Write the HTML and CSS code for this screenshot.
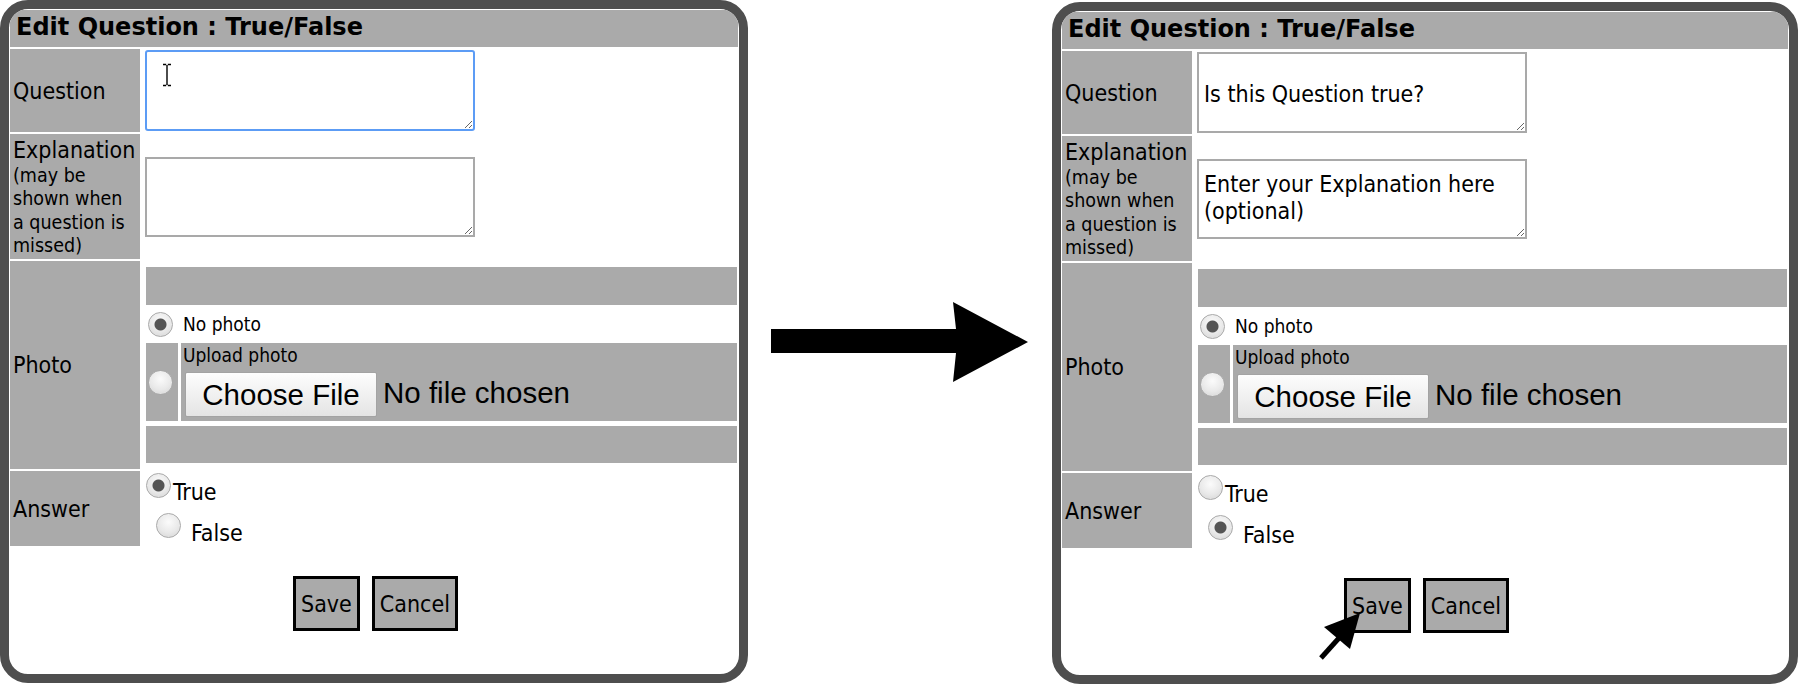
FILE: index.html
```html
<!DOCTYPE html>
<html lang="en">
<head>
<meta charset="utf-8">
<title>Edit Question : True/False</title>
<link rel="stylesheet" href="styles.css">
</head>
<body>
<div class="stage">
  <section class="panel panel-left">
    <div class="title">Edit Question : True/False</div>
    <div class="form">
      <div class="lbl lbl-mid">Question</div>
      <div class="cell cell-q"><textarea class="ta ta-q focus"></textarea></div>
      <div class="lbl lbl-top">Explanation<span class="sub">(may be<br>shown when<br>a question is<br>missed)</span></div>
      <div class="cell cell-e"><textarea class="ta ta-e"></textarea></div>
      <div class="lbl lbl-mid">Photo</div>
      <div class="cell cell-photo">
        <div class="bar"></div>
        <div class="opt"><input type="radio" class="radio" name="p1" checked><span class="small">No photo</span></div>
        <div class="upload">
          <div class="upload-radio"><input type="radio" class="radio" name="p1"></div>
          <div class="upload-main">
            <div class="small upload-label">Upload photo</div>
            <div class="file"><button class="file-btn" type="button">Choose File</button><span class="file-name">No file chosen</span></div>
          </div>
        </div>
        <div class="bar bar-bottom"></div>
      </div>
      <div class="lbl lbl-mid">Answer</div>
      <div class="cell cell-answer">
        <div class="ans ans-true"><input type="radio" class="radio" name="a1" checked><span class="ans-text">True</span></div>
        <div class="ans ans-false"><input type="radio" class="radio" name="a1"><span class="ans-text">False</span></div>
      </div>
    </div>
    <div class="actions"><button class="btn" type="button">Save</button><button class="btn" type="button">Cancel</button></div>
    <svg class="ibeam" width="10" height="24" viewBox="0 0 10 24"><path d="M1 1.5h3.2M5.8 1.5H9M5 2v20M1 22.5h3.2M5.8 22.5H9" stroke="#000" stroke-width="1.4" fill="none"/></svg>
  </section>

  <div class="arrow-col">
    <svg class="big-arrow" width="304" height="684" viewBox="0 0 304 684"><polygon points="23,329 208,329 205,302 280,342 205,382 208,353 23,353" fill="#000"/></svg>
  </div>

  <section class="panel panel-right">
    <div class="title">Edit Question : True/False</div>
    <div class="form">
      <div class="lbl lbl-mid">Question</div>
      <div class="cell cell-q"><textarea class="ta ta-q">Is this Question true?</textarea></div>
      <div class="lbl lbl-top">Explanation<span class="sub">(may be<br>shown when<br>a question is<br>missed)</span></div>
      <div class="cell cell-e"><textarea class="ta ta-e">Enter your Explanation here
(optional)</textarea></div>
      <div class="lbl lbl-mid">Photo</div>
      <div class="cell cell-photo">
        <div class="bar"></div>
        <div class="opt"><input type="radio" class="radio" name="p2" checked><span class="small">No photo</span></div>
        <div class="upload">
          <div class="upload-radio"><input type="radio" class="radio" name="p2"></div>
          <div class="upload-main">
            <div class="small upload-label">Upload photo</div>
            <div class="file"><button class="file-btn" type="button">Choose File</button><span class="file-name">No file chosen</span></div>
          </div>
        </div>
        <div class="bar bar-bottom"></div>
      </div>
      <div class="lbl lbl-mid">Answer</div>
      <div class="cell cell-answer">
        <div class="ans ans-true"><input type="radio" class="radio" name="a2"><span class="ans-text">True</span></div>
        <div class="ans ans-false"><input type="radio" class="radio" name="a2" checked><span class="ans-text">False</span></div>
      </div>
    </div>
    <div class="actions"><button class="btn" type="button">Save</button><button class="btn" type="button">Cancel</button></div>
    <svg class="pointer" width="50" height="60" viewBox="0 0 50 60"><polygon points="43,11 7,25 33,47" fill="#000"/><path d="M22 36 L4 56" stroke="#000" stroke-width="5" fill="none"/></svg>
  </section>
</div>
</body>
</html>
```
FILE: styles.css
```css
* { box-sizing: border-box; }

html, body {
  margin: 0;
  padding: 0;
  background: #fff;
}

body {
  width: 1800px;
  height: 684px;
  overflow: hidden;
  font-family: "DejaVu Sans Condensed", "DejaVu Sans", sans-serif;
  color: #000;
}

.stage {
  display: flex;
  align-items: flex-start;
}

.panel {
  position: relative;
  width: 748px;
  height: 683px;
  border: 9px solid #4e4e4e;
  border-radius: 28px;
  padding: 1px;
  background: #fff;
  overflow: hidden;
  flex: none;
}

.panel-right {
  width: 746px;
  height: 682px;
  margin-top: 2px;
}

.arrow-col {
  width: 304px;
  height: 684px;
  flex: none;
}

.big-arrow { display: block; }

.title {
  height: 37px;
  line-height: 35px;
  padding-left: 6px;
  background: #aaa;
  font-family: "DejaVu Sans", sans-serif;
  font-weight: bold;
  font-size: 24px;
  white-space: nowrap;
}

.form {
  margin-top: 2px;
  display: grid;
  grid-template-columns: 130px 1fr;
  column-gap: 2px;
  row-gap: 2px;
}

.lbl {
  background: #aaa;
  padding: 2px 3px;
  font-size: 23px;
  line-height: 28px;
  white-space: nowrap;
}

.lbl-mid {
  display: flex;
  align-items: center;
}

.lbl-top .sub {
  display: block;
  font-size: 19.5px;
  line-height: 23.25px;
}

.cell {
  padding-left: 3px;
}

.cell-q {
  padding-top: 1px;
  padding-bottom: 1px;
}

.cell-e {
  display: flex;
  align-items: center;
}

.ta {
  display: block;
  width: 330px;
  margin: 0;
  border: 2px solid #a9a9a9;
  background: #fff;
  font-family: "DejaVu Sans Condensed", "DejaVu Sans", sans-serif;
  font-size: 23px;
  line-height: 27px;
  color: #000;
  padding: 20px 5px 0 5px;
  overflow: hidden;
  outline: none;
  resize: both;
}

.ta-q {
  height: 81px;
  padding-top: 27px;
}

.ta-e {
  height: 80px;
  padding-top: 10px;
}

.ta.focus {
  border-color: #5c9cf5;
  border-radius: 3px;
}

.ibeam {
  position: absolute;
  left: 153px;
  top: 54px;
}

.cell-photo {
  padding: 6px 1px 6px 4px;
  display: flex;
  flex-direction: column;
}

.bar {
  height: 38px;
  background: #aaa;
}

.bar-bottom {
  height: 37px;
  margin-top: 5px;
}

.radio {
  appearance: none;
  -webkit-appearance: none;
  width: 25px;
  height: 25px;
  margin: 0;
  border-radius: 50%;
  border: 1px solid #a8a8a8;
  background: radial-gradient(circle at 50% 35%, #fbfbfb 0, #e9e9e9 55%, #d2d2d2 100%);
  box-shadow: inset 0 0 1px #fff;
  flex: none;
}

.radio:checked {
  background:
    radial-gradient(circle, #555 0, #555 5.5px, rgba(85,85,85,0) 6.5px),
    radial-gradient(circle at 50% 35%, #fbfbfb 0, #e9e9e9 55%, #d2d2d2 100%);
}

.small {
  font-size: 19px;
  line-height: 24px;
  white-space: nowrap;
}

.opt {
  height: 38px;
  display: flex;
  align-items: center;
  padding-left: 2px;
  gap: 10px;
}

.upload {
  height: 78px;
  display: flex;
  gap: 3px;
}

.upload-radio {
  width: 32px;
  background: #aaa;
  display: flex;
  align-items: center;
  padding-left: 2px;
}

.upload-main {
  flex: 1;
  background: #aaa;
  padding-left: 2px;
}

.file {
  display: flex;
  align-items: center;
  margin-top: 5px;
  padding-left: 2px;
}

.file-btn {
  width: 192px;
  height: 45px;
  margin: 0;
  padding: 0;
  border: 1px solid #a3a3a3;
  border-radius: 2px;
  background: linear-gradient(#fdfdfd, #e4e4e4);
  font-family: "Liberation Sans", Arial, sans-serif;
  font-size: 29.5px;
  color: #000;
}

.file-name {
  margin-left: 6px;
  margin-top: -3px;
  font-family: "Liberation Sans", Arial, sans-serif;
  font-size: 29.5px;
  white-space: nowrap;
}

.cell-answer {
  padding-left: 4px;
  height: 75px;
}

.ans {
  display: flex;
  align-items: flex-start;
}

.ans-true {
  height: 40px;
}

.ans-false {
  height: 35px;
}

.ans .radio {
  margin-top: 2px;
}

.ans-text {
  font-size: 23px;
  line-height: 28px;
}

.ans-true .ans-text {
  margin-left: 2px;
  margin-top: 7px;
}

.ans-false .radio {
  margin-left: 10px;
}

.ans-false .ans-text {
  margin-left: 10px;
  margin-top: 8px;
}

.actions {
  display: flex;
  justify-content: center;
  gap: 12px;
  margin-top: 30px;
  padding-left: 3px;
}

.btn {
  height: 55px;
  margin: 0;
  padding: 0 5px;
  border: 3px solid #000;
  background: #aaa;
  font-family: "DejaVu Sans Condensed", "DejaVu Sans", sans-serif;
  font-size: 23px;
  color: #000;
}

.pointer {
  position: absolute;
  left: 256px;
  top: 591px;
}
```
